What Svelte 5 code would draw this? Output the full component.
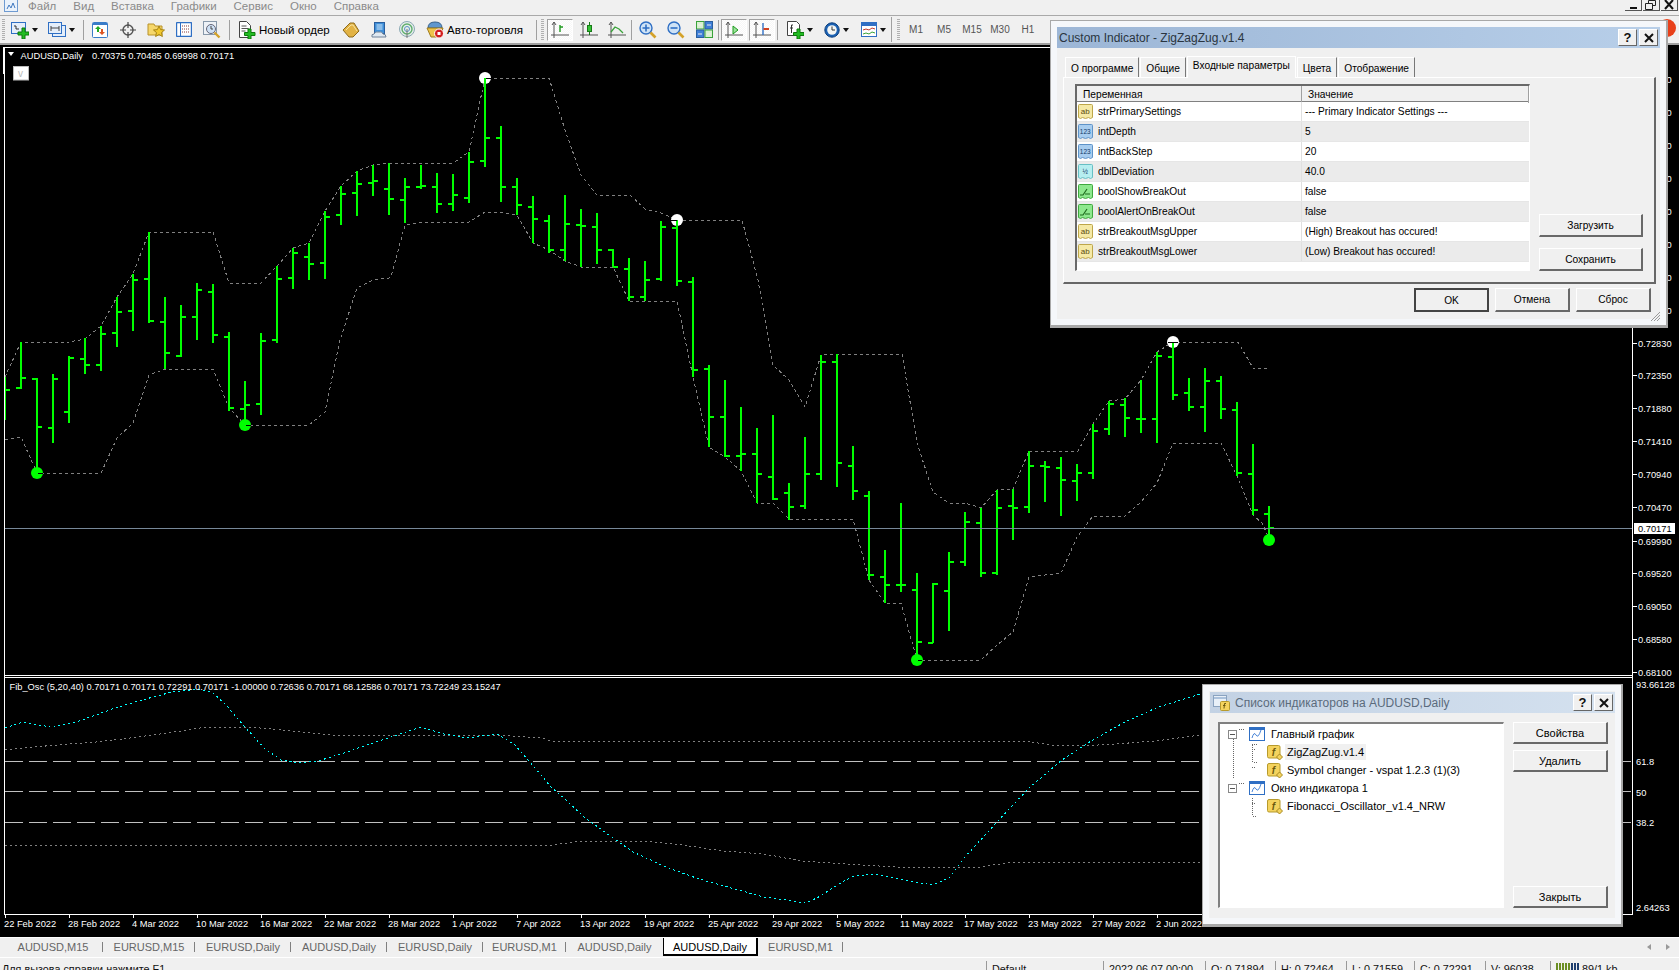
<script lang="ts">
  // [x-index from 5 step 16]: high, low, open, close in page pixels
  const bars = [
    [377,420,0,390],[342,389,388,378],[378,473,379,427],[374,443,428,379],[356,423,412,358],
    [338,374,359,365],[326,371,365,334],[297,347,333,312],[274,331,311,280],[232,323,279,321],
    [297,369,322,353],[305,357,356,317],[283,340,317,290],[284,343,292,335],[332,411,337,408],
    [381,423,409,405],[333,415,404,341],[266,343,340,279],[248,289,278,253],[243,280,257,264],
    [211,279,263,217],[186,225,215,194],[171,216,193,184],[165,196,183,181],[163,215,189,199],
    [178,223,200,187],[165,189,187,186],[173,213,187,204],[174,211,204,195],[152,203,198,162],
    [78,167,161,138],[126,202,138,187],[178,215,187,205],[196,243,207,219],[215,253,221,250],
    [195,261,250,224],[209,267,225,226],[213,264,227,250],[249,267,250,267],[258,301,269,297],
    [261,301,297,280],[221,281,279,227],[220,286,228,281],[277,377,282,370],[365,447,369,417],
    [380,457,417,456],[407,471,456,454],[428,503,454,474],[415,500,477,499],[483,520,493,507],
    [437,509,506,474],[355,480,474,362],[354,487,362,463],[446,500,466,491],[491,580,496,575],
    [550,603,577,585],[503,592,585,585],[573,660,590,642],[583,643,643,584],[552,631,591,562],
    [512,566,562,522],[508,577,523,573],[490,575,573,508],[489,540,506,508],[451,513,507,466],
    [461,502,466,467],[457,516,468,480],[464,501,481,473],[424,479,473,431],[401,435,429,404],
    [398,437,405,418],[380,433,419,419],[352,443,419,356],[342,400,357,395],[378,411,393,407],
    [368,432,407,381],[376,419,381,409],[402,476,410,473],[444,515,474,510],[506,538,514,528]
  ];

  const barPath = bars.map((b, i) => {
    const x = 5 + i * 16;
    let d = `M${x} ${b[0]}V${b[1]}`;
    if (b[2]) d += `M${x - 5} ${b[2]}H${x}`;
    d += `M${x} ${b[3]}H${x + 5}`;
    return d;
  }).join('');

  const line = (pts: number[][]) => 'M' + pts.map((p) => p.join(' ')).join('L');

  const upper = line([[5,377],[21,342],[69,342],[85,339],[101,326],[117,297],[133,274],[149,232],[213,232],[229,283],[261,283],[277,266],[293,248],[309,243],[325,211],[341,186],[357,171],[373,165],[389,163],[453,163],[469,152],[485,78],[549,78],[565,130],[581,175],[597,195],[630,195],[645,209],[661,213],[677,220],[742,220],[758,280],[773,365],[789,380],[805,407],[821,355],[837,354],[902,354],[917,443],[933,492],[949,503],[965,503],[981,508],[997,490],[1013,489],[1029,451],[1078,451],[1093,424],[1109,401],[1125,399],[1141,380],[1157,352],[1173,342],[1238,342],[1253,368],[1269,368]]);
  const lower = line([[5,440],[21,437],[37,473],[101,473],[117,438],[133,423],[149,375],[165,369],[213,369],[229,408],[245,425],[309,425],[325,412],[340,340],[357,288],[373,280],[389,278],[392,273],[405,225],[421,222],[469,222],[485,212],[501,212],[517,215],[533,243],[549,250],[565,261],[581,267],[613,267],[629,301],[677,301],[693,377],[709,447],[725,457],[741,471],[757,503],[773,503],[789,519],[853,519],[869,580],[885,603],[901,603],[917,660],[981,660],[997,645],[1013,632],[1029,577],[1061,573],[1077,537],[1093,516],[1125,516],[1141,502],[1157,483],[1173,443],[1221,443],[1237,476],[1253,515],[1262,523],[1269,538]]);

  const cyan = line([[5,728],[23,722],[50,727],[76,722],[96,715],[115,708],[142,700],[172,692],[199,689],[212,692],[226,705],[245,727],[264,748],[281,760],[298,763],[318,761],[344,753],[367,745],[394,736],[421,727],[444,734],[467,738],[497,734],[515,745],[530,762],[551,787],[564,798],[584,817],[609,835],[633,852],[666,867],[699,879],[731,888],[764,897],[793,901],[805,903],[817,898],[842,882],[854,876],[874,874],[891,877],[915,882],[933,885],[950,877],[964,858],[997,822],[1029,788],[1062,760],[1091,741],[1123,723],[1156,708],[1200,694]]);
  const oscHi = line([[5,750],[23,748],[57,745],[96,742],[130,738],[168,733],[207,727],[249,727],[283,730],[333,735],[364,736],[402,735],[497,735],[543,738],[551,741],[1025,741],[1050,745],[1082,746],[1115,744],[1156,741],[1200,735]]);
  const oscLo = line([[5,845],[553,845],[574,842],[593,841],[642,841],[682,845],[723,851],[764,854],[801,861],[846,864],[895,867],[952,868],[980,867],[1013,862],[1200,862]]);

  const dates = ['22 Feb 2022','28 Feb 2022','4 Mar 2022','10 Mar 2022','16 Mar 2022','22 Mar 2022','28 Mar 2022','1 Apr 2022','7 Apr 2022','13 Apr 2022','19 Apr 2022','25 Apr 2022','29 Apr 2022','5 May 2022','11 May 2022','17 May 2022','23 May 2022','27 May 2022','2 Jun 2022'];
  const prices = [['0.76590',79],['0.76120',112],['0.75650',145],['0.75180',178],['0.74710',211],['0.74240',244],['0.73770',277],['0.73300',310],['0.72830',343],['0.72350',375],['0.71880',408],['0.71410',441],['0.70940',474],['0.70470',507],['0.69990',541],['0.69520',573],['0.69050',606],['0.68580',639],['0.68100',672]];
  const levels = [['61.8',761],['50',792],['38.2',822]];

  const menu = ['Файл','Вид','Вставка','Графики','Сервис','Окно','Справка'];
  const periods = ['M1','M5','M15','M30','H1'];
  const dlgTabs = ['О программе','Общие','Входные параметры','Цвета','Отображение'];
  const params = [
    ['ab','strPrimarySettings','--- Primary Indicator Settings ---'],
    ['int','intDepth','5'],
    ['int','intBackStep','20'],
    ['dbl','dblDeviation','40.0'],
    ['bool','boolShowBreakOut','false'],
    ['bool','boolAlertOnBreakOut','false'],
    ['ab','strBreakoutMsgUpper','(High) Breakout has occured!'],
    ['ab','strBreakoutMsgLower','(Low) Breakout has occured!']
  ];
  const chartTabs = [['AUDUSD,M15',100],['EURUSD,M15',92],['EURUSD,Daily',96],['AUDUSD,Daily',96],['EURUSD,Daily',96],['EURUSD,M1',83],['AUDUSD,Daily',97],['AUDUSD,Daily',95],['EURUSD,M1',85]];
  const statusCells = [['Default',117],['2022.06.07 00:00',102],['O: 0.71894',70],['H: 0.72464',71],['L: 0.71559',68],['C: 0.72291',71],['V: 96038',65]];
</script>

{#snippet paramIcon(kind)}
  <svg class="row-icon" class:i-ab={kind === 'ab'} class:i-int={kind === 'int'} class:i-dbl={kind === 'dbl'} class:i-bool={kind === 'bool'} viewBox="0 0 15 15" width="15" height="15">
    <path class="pg" d="M.5 1.5q0-1 1-1h12q1 0 1 1v12l-2 1-2-1-3 1-3-1-2 1-2-1z" />
    {#if kind === 'ab'}<text x="7.3" y="10" text-anchor="middle">ab</text>{/if}
    {#if kind === 'int'}<text x="7.3" y="9.6" text-anchor="middle" class="small">123</text>{/if}
    {#if kind === 'dbl'}<text x="7.3" y="9.6" text-anchor="middle" class="small">½</text>{/if}
    {#if kind === 'bool'}<path d="M2 11h3l4-6h0M7 10h5" fill="none" stroke="#1d6b1d" stroke-width="1.2" />{/if}
  </svg>
{/snippet}

{#snippet chartIcon()}
  <svg viewBox="0 0 16 14" width="16" height="14">
    <rect x=".5" y=".5" width="15" height="13" fill="#fff" stroke="#2f6fc4" />
    <rect x="1" y="1" width="14" height="2" fill="#2f6fc4" />
    <path d="M3 11q2-7 4-3t5-5" fill="none" stroke="#4a86d8" />
  </svg>
{/snippet}

{#snippet fnIcon()}
  <svg viewBox="0 0 16 15" width="16" height="15">
    <rect x=".5" y=".5" width="12.5" height="12.5" rx="1.5" fill="#f4d35e" stroke="#b79a2c" />
    <text x="6.5" y="10.5" text-anchor="middle" class="fn">f</text>
    <path d="M12.5 9l3 3-3 3-3-3z" fill="#f4d35e" stroke="#a88a20" />
  </svg>
{/snippet}

{#snippet axes(color)}
  <path d="M3 1v16M0 14h18M1 4l2-3 2 3" fill="none" stroke="#555" />
{/snippet}

<div class="app">
  <div class="menubar">
    <svg class="app-icon" viewBox="0 0 14 12" width="14" height="12">
      <rect x=".5" y="-2" width="13" height="13.5" fill="#eaf2fb" stroke="#6f9bd1" />
      <path d="M3 9l2-4 2 3 2-5 2 5" fill="none" stroke="#3f78c0" />
    </svg>
    {#each menu as item}
      <span class="menu-item">{item}</span>
    {/each}
    <div class="win-buttons">
      <span class="win-btn"><i class="min"></i></span>
      <span class="win-btn"><svg viewBox="0 0 12 10" width="12" height="10"><path d="M3.5 3V.5h7v5H8M.5 3.5h7v6h-7z" fill="none" stroke="#222" /></svg></span>
      <span class="win-btn">
        <svg viewBox="0 0 10 10" width="10" height="10"><path d="M1 0l8 9M9 0l-8 9" stroke="#111" stroke-width="2" /></svg>
      </span>
    </div>
  </div>

  <div class="toolbar">
    <i class="handle"></i>
    <div class="cell dd first">
      <svg viewBox="0 0 18 18" width="18" height="18"><rect x=".5" y="1.5" width="14" height="11" fill="#e4eefa" stroke="#2f6fc4" /><path d="M3 5h2v3h3" fill="none" stroke="#333" /><path d="M11 7h3v4h4v3h-4v4h-3v-4H7v-3h4z" fill="#22bb22" stroke="#0c7a0c" /></svg>
      <i class="arrow"></i>
    </div>
    <div class="cell dd">
      <svg viewBox="0 0 18 18" width="18" height="18"><rect x="4.5" y="4.5" width="13" height="11" fill="#e4eefa" stroke="#2f6fc4" /><rect x=".5" y="1.5" width="13" height="11" fill="#e4eefa" stroke="#2f6fc4" /><path d="M3 5v5M11 5v5M3 7h8" stroke="#444" fill="none" /></svg>
      <i class="arrow"></i>
    </div>
    <i class="sep"></i>
    <div class="cell"><svg viewBox="0 0 16 16" width="16" height="16"><rect x=".5" y=".5" width="15" height="15" rx="1" fill="#fff" stroke="#3a7cc8" /><rect x="1" y="1" width="14" height="2" fill="#3a7cc8" /><path d="M6 4l3 3H7v3H5V7H3z" fill="#22aa22" /><path d="M10 13l-3-3h2V7h2v3h2z" fill="#dd5522" /></svg></div>
    <div class="cell"><svg viewBox="0 0 16 16" width="16" height="16"><circle cx="8" cy="8" r="5" fill="none" stroke="#555" stroke-width="1.4" /><path d="M8 0v6M8 10v6M0 8h6M10 8h6" stroke="#444" stroke-width="1.2" /></svg></div>
    <div class="cell"><svg viewBox="0 0 18 17" width="18" height="17"><path d="M1 3h6l1 2h7v9H1z" fill="#f6d76b" stroke="#b8922a" /><path d="M12 5l1.6 3.6 3.9.4-3 2.6.9 3.9-3.4-2-3.4 2 .9-3.9-3-2.6 3.9-.4z" fill="#f2c92e" stroke="#a58214" /></svg></div>
    <div class="cell"><svg viewBox="0 0 16 15" width="16" height="15"><rect x=".5" y=".5" width="15" height="14" rx="1" fill="#fff" stroke="#2f6fc4" stroke-width="1.4" /><path d="M4.5 1v13" stroke="#2f6fc4" /><path d="M6 4h7M6 7h7M6 10h7" stroke="#8a3a3a" stroke-dasharray="1 1" /></svg></div>
    <div class="cell"><svg viewBox="0 0 18 18" width="18" height="18"><rect x=".5" y=".5" width="13" height="13" fill="#eef2f7" stroke="#8899aa" /><circle cx="8" cy="8" r="4.5" fill="#cfe2f6" stroke="#667" /><path d="M8 5v3h2" fill="none" stroke="#444" /><path d="M11.5 11.5l5 5" stroke="#d4a22a" stroke-width="2.4" /></svg></div>
    <i class="sep wide"></i>
    <div class="cell text-btn order">
      <svg viewBox="0 0 18 18" width="18" height="18"><path d="M1.5.5h7l4 4v12h-11z" fill="#fff" stroke="#444" /><path d="M3.5 5h5M3.5 7.5h7M3.5 10h4" stroke="#555" /><path d="M10 8h3v3.500h4v3h-4v3.500h-3v-3.500H6.500v-3H10z" fill="#22bb22" stroke="#0c7a0c" /></svg>
      <span>Новый ордер</span>
    </div>
    <div class="cell"><svg viewBox="0 0 18 16" width="18" height="16"><path d="M1 8l7-7h4l5 8-6 6H7z" fill="#e2b345" stroke="#8d6a1a" /><path d="M4 8l5-5h2l4 6" fill="none" stroke="#f7e3a0" /></svg></div>
    <div class="cell"><svg viewBox="0 0 16 16" width="16" height="16"><rect x="3.500" y=".5" width="10" height="11" fill="#3f8fd8" stroke="#2a5f9e" /><path d="M5.500 3h6M5.500 5h6M5.500 7h6" stroke="#d9ecfb" /><path d="M1 15q-1-3 2-3 1-3 5-2 3-1 4 2 3 0 3 3z" fill="#dfe8f1" stroke="#6f8299" /></svg></div>
    <div class="cell"><svg viewBox="0 0 16 17" width="16" height="17"><circle cx="8" cy="8" r="7.500" fill="#e6eeea" stroke="#8aa8b4" /><circle cx="8" cy="8" r="5" fill="none" stroke="#5fae6e" stroke-width="1.4" /><circle cx="8" cy="8" r="2.500" fill="none" stroke="#5a93c4" /><path d="M8 8v9" stroke="#777" /></svg></div>
    <div class="cell text-btn auto">
      <svg viewBox="0 0 18 18" width="18" height="18"><path d="M2 7q0-6 7-6t7 6z" fill="#5f97cf" stroke="#345f8c" /><path d="M1 7h16l-3 9H5z" fill="#eec44a" stroke="#a07c1c" /><circle cx="13" cy="12.500" r="4.500" fill="#d21f1f" stroke="#fff" /><rect x="11.500" y="11" width="3" height="3" fill="#fff" /></svg>
      <span>Авто-торговля</span>
    </div>
    <i class="sep"></i>
    <i class="handle h2"></i>
    <div class="toggle">
      <svg viewBox="0 0 18 18" width="18" height="18">{@render axes()}<path d="M9 11V4M9 6h3" fill="none" stroke="#1f9a1f" stroke-width="1.4" /></svg>
    </div>
    <div class="cell"><svg viewBox="0 0 18 18" width="18" height="18">{@render axes()}<rect x="7.500" y="4.500" width="4" height="6" fill="#35c335" stroke="#187a18" /><path d="M9.500 1v3M9.500 11v3" stroke="#187a18" /></svg></div>
    <div class="cell"><svg viewBox="0 0 18 18" width="18" height="18">{@render axes()}<path d="M3 11l4-5 4 2 4 4" fill="none" stroke="#3aa33a" stroke-width="1.3" /></svg></div>
    <i class="sep"></i>
    <div class="cell"><svg viewBox="0 0 18 18" width="18" height="18"><circle cx="7" cy="7" r="6" fill="#cfe3f6" stroke="#2f6fc4" stroke-width="1.4" /><path d="M3.500 7h7M7 3.500v7" stroke="#2f6fc4" stroke-width="1.6" /><path d="M11.500 11.500l5 5" stroke="#d4a22a" stroke-width="2.600" /></svg></div>
    <div class="cell"><svg viewBox="0 0 18 18" width="18" height="18"><circle cx="7" cy="7" r="6" fill="#cfe3f6" stroke="#2f6fc4" stroke-width="1.4" /><path d="M3.500 7h7" stroke="#2f6fc4" stroke-width="1.6" /><path d="M11.500 11.500l5 5" stroke="#d4a22a" stroke-width="2.600" /></svg></div>
    <div class="cell"><svg viewBox="0 0 17 17" width="17" height="17"><rect x=".5" y=".5" width="7.500" height="7.500" fill="#d8f0d0" stroke="#3aa33a" /><rect x="9" y=".5" width="7.500" height="7.500" fill="#3f7fd8" stroke="#2a5f9e" /><rect x=".5" y="9" width="7.500" height="7.500" fill="#3f7fd8" stroke="#2a5f9e" /><rect x="9" y="9" width="7.500" height="7.500" fill="#d8f0d0" stroke="#3aa33a" /><path d="M2 4h4M11 4h4M2 13h4M11 13h4" stroke="#eee" /></svg></div>
    <i class="sep"></i>
    <div class="toggle">
      <svg viewBox="0 0 18 18" width="18" height="18">{@render axes()}<path d="M8 5l5 4-5 4z" fill="#9be29b" stroke="#1f9a1f" /></svg>
    </div>
    <div class="toggle">
      <svg viewBox="0 0 18 18" width="18" height="18">{@render axes()}<path d="M10 2v12" stroke="#2f6fc4" stroke-width="1.4" /><path d="M11 7h5v2h-5l-1-1z" fill="#d2401f" /></svg>
    </div>
    <i class="sep"></i>
    <div class="cell dd x2">
      <svg viewBox="0 0 17 18" width="17" height="18"><path d="M.5.5h9l3 3v11H.5z" fill="#fff" stroke="#444" /><path d="M6 4H4.500v8M3 7h3" fill="none" stroke="#333" /><path d="M10 8h3v3.500h4v3h-4v3.500h-3v-3.500H6.500v-3H10z" fill="#22bb22" stroke="#0c7a0c" /></svg>
      <i class="arrow"></i>
    </div>
    <div class="cell dd x2">
      <svg viewBox="0 0 16 16" width="16" height="16"><circle cx="8" cy="8" r="7.200" fill="#1c62b4" stroke="#0e3f7c" /><circle cx="8" cy="8" r="4.800" fill="#f4f6f4" /><path d="M8 4.500V8h3" fill="none" stroke="#333" /></svg>
      <i class="arrow"></i>
    </div>
    <div class="cell dd x2">
      <svg viewBox="0 0 16 15" width="16" height="15"><rect x=".5" y=".5" width="15" height="14" fill="#fff" stroke="#2f6fc4" /><rect x="1" y="1" width="14" height="3" fill="#2f6fc4" /><path d="M2 8l3-1 3 1 3-2 3 1" fill="none" stroke="#c0392b" /><path d="M2 12l3-1 3 1 3-2 3 1" fill="none" stroke="#3aa33a" /></svg>
      <i class="arrow"></i>
    </div>
    <i class="sep tall"></i>
    <i class="handle h3"></i>
    {#each periods as p}
      <span class="period">{p}</span>
    {/each}
    <i class="red-dot"></i>
  </div>
  <div class="band"></div>

  <div class="workspace">
    <svg class="chart" viewBox="0 45 1679 892" width="1679" height="892">
      <path d={upper} class="env" />
      <path d={lower} class="env" />
      <circle cx="485" cy="78" r="6" fill="#fff" />
      <circle cx="677" cy="220" r="6" fill="#fff" />
      <circle cx="1173" cy="342" r="6" fill="#fff" />
      <circle cx="37" cy="473" r="6" fill="#0f0" />
      <circle cx="245" cy="425" r="6" fill="#0f0" />
      <circle cx="917" cy="660" r="6" fill="#0f0" />
      <path d={barPath} class="bars" />
      <circle cx="1269" cy="540" r="6" fill="#0f0" />
      <path d="M486 78h5M671 220h6M1168 342h10M38 473h5M246 425h5M918 660h4" class="ticks" />
      <path d="M5 528H1632" stroke="#778899" shape-rendering="crispEdges" />

      <path d={oscHi} class="osc-grey" />
      <path d={oscLo} class="osc-grey" />
      <path d="M5 761.500H1632M5 791.500H1632M5 822.500H1632" class="fib" />
      <path d={cyan} class="osc-cyan" />

      <path d="M4 47.500H1632.500V914.500H4.500ZM4 675.500H1632M4 677.500H1632" class="frame" />
      {#each dates as d, i}
        <path d="M{5 + i * 64}.5 915v3" class="frame" />
        <text x={4 + i * 64} y="926.500">{d}</text>
      {/each}
      {#each prices as p}
        <path d="M1633 {p[1]}.5h4" class="frame" />
        <text x="1638" y={p[1] + 3.500}>{p[0]}</text>
      {/each}
      {#each levels as l}
        <text x="1636" y={l[1] + 3.500}>{l[0]}</text>
      {/each}
      <rect x="1634" y="523" width="41" height="11" fill="#fff" />
      <text x="1638" y="531.500" fill="#000" class="dark">0.70171</text>
      <text x="1636" y="687.500">93.66128</text>
      <text x="1636" y="910.500">2.64263</text>

      <path d="M8 52h6l-3 4z" fill="#fff" />
      <text x="20.500" y="59">AUDUSD,Daily</text>
      <text x="92" y="59">0.70375 0.70485 0.69998 0.70171</text>
      <rect x="13.500" y="66.500" width="15" height="13.500" fill="#fff" stroke="#bbb" />
      <text x="18" y="77" class="vbox">v</text>
      <text x="9.500" y="690">Fib_Osc (5,20,40) 0.70171 0.70171 0.72291 0.70171 -1.00000 0.72636 0.70171 68.12586 0.70171 73.72249 23.15247</text>
    </svg>
  </div>

  <div class="tabbar">
    {#each chartTabs as t, i}
      <span class="chart-tab" class:active={i === 7} class:before-active={i === 6} style="width: {t[1]}px">{t[0]}</span>
    {/each}
    <i class="nav left"></i>
    <i class="nav right"></i>
  </div>

  <div class="statusbar">
    <span class="status-help">Для вызова справки нажмите F1</span>
    {#each statusCells as c}
      <span class="status-cell" style="width: {c[1]}px">{c[0]}</span>
    {/each}
    <span class="status-cell conn">
      <svg viewBox="0 0 24 10" width="24" height="10"><path d="M1 0v10M4 0v10M7 0v10M10 0v10M13 0v10" stroke="#6b8e23" stroke-width="2" /><path d="M16 0v10M19 0v10M22 0v10" stroke="#1f3f6f" stroke-width="2" /></svg>
      89/1 kb
    </span>
  </div>

  <div class="dialog props">
    <div class="title-bar">
      <span class="title">Custom Indicator - ZigZagZug.v1.4</span>
      <span class="cap-btn">?</span>
      <span class="cap-btn"><svg viewBox="0 0 10 10" width="10" height="10"><path d="M1 1l8 8M9 1l-8 8" stroke="#111" stroke-width="2" /></svg></span>
    </div>
    <div class="dlg-tabs">
      {#each dlgTabs as t, i}
        <span class="dlg-tab" class:current={i === 2}>{t}</span>
      {/each}
    </div>
    <div class="panel">
      <div class="param-table">
        <div class="param-head">
          <span>Переменная</span>
          <span>Значение</span>
        </div>
        {#each params as row, i}
          <div class="param-row" class:odd={i % 2 === 1}>
            <span class="name">{@render paramIcon(row[0])}{row[1]}</span>
            <span class="val">{row[2]}</span>
          </div>
        {/each}
      </div>
      <div class="side-buttons">
        <button class="btn">Загрузить</button>
        <button class="btn">Сохранить</button>
      </div>
    </div>
    <div class="dlg-actions">
      <button class="btn default">OK</button>
      <button class="btn">Отмена</button>
      <button class="btn">Сброс</button>
    </div>
    <svg class="grip" viewBox="0 0 9 9" width="9" height="9"><path d="M0 9l9-9M3 9l6-6M6 9l3-3" stroke="#999" /></svg>
  </div>

  <div class="dialog list">
    <div class="title-bar inactive">
      <svg class="title-icon" viewBox="0 0 17 16" width="17" height="16"><rect x=".5" y=".5" width="13" height="11" fill="#e8f0f8" stroke="#8aa3c0" /><path d="M1 3h12" stroke="#6f93c0" /><rect x="7.500" y="6.500" width="9" height="9" rx="1" fill="#f4d35e" stroke="#b79a2c" /><path d="M13 8.500h-1.500l-.5 5M10 10.500h2.500" fill="none" stroke="#6b5a10" /></svg>
      <span class="title">Список индикаторов на AUDUSD,Daily</span>
      <span class="cap-btn">?</span>
      <span class="cap-btn"><svg viewBox="0 0 10 10" width="10" height="10"><path d="M1 1l8 8M9 1l-8 8" stroke="#111" stroke-width="2" /></svg></span>
    </div>
    <div class="list-body">
      <div class="tree">
        <svg class="tree-lines" viewBox="0 0 60 100" width="60" height="100">
          <path d="M14.500 17V60M33.500 27V44H38M33.500 27V26H38M33.500 80V98H38" transform="translate(-1 -6)" />
          <path d="M19 6.500h5M19 60.500h5M32 26.500h4M32 44.500h4M32 80.500h4" transform="translate(0 -1)" />
        </svg>
        <div class="tree-row top"><i class="expander"></i>{@render chartIcon()}<span>Главный график</span></div>
        <div class="tree-row child">{@render fnIcon()}<span class="selected">ZigZagZug.v1.4</span></div>
        <div class="tree-row child">{@render fnIcon()}<span>Symbol changer - vspat 1.2.3 (1)(3)</span></div>
        <div class="tree-row top"><i class="expander"></i>{@render chartIcon()}<span>Окно индикатора 1</span></div>
        <div class="tree-row child">{@render fnIcon()}<span>Fibonacci_Oscillator_v1.4_NRW</span></div>
      </div>
      <div class="list-buttons">
        <button class="btn">Свойства</button>
        <button class="btn">Удалить</button>
        <button class="btn push">Закрыть</button>
      </div>
    </div>
  </div>
</div>

<style>
  :global(body) {
    margin: 0;
    background: #000;
  }

  .app {
    position: relative;
    width: 1679px;
    height: 970px;
    overflow: hidden;
    display: flex;
    flex-direction: column;
    background: #f0f0f0;
    font-family: "Liberation Sans", Arial, sans-serif;
    font-size: 11px;
    color: #000;
  }

  /* menu */
  .menubar {
    height: 16px;
    flex: none;
    display: flex;
    align-items: flex-start;
    padding-left: 4px;
    box-sizing: border-box;
    border-bottom: 1px solid #a9a9a9;
    overflow: hidden;
  }

  .app-icon {
    margin-right: 10px;
  }

  .menu-item {
    color: #8a8a8a;
    font-size: 11.500px;
    line-height: 13px;
    margin-right: 17px;
  }

  .win-buttons {
    margin-left: auto;
    display: flex;
    gap: 1px;
    margin-right: 1px;
  }

  .win-btn {
    width: 17px;
    height: 11px;
    background: #f0f0f0;
    border-right: 1px solid #555;
    border-bottom: 1px solid #555;
    display: flex;
    align-items: center;
    justify-content: center;
    box-sizing: border-box;
  }

  .win-btn .min {
    width: 7px;
    height: 2px;
    background: #111;
    margin-top: 6px;
  }

  /* toolbar */
  .toolbar {
    position: relative;
    height: 27px;
    flex: none;
    display: flex;
    align-items: center;
    padding-left: 2px;
    box-sizing: border-box;
  }

  .handle {
    width: 3px;
    height: 22px;
    flex: none;
    background: repeating-linear-gradient(#b0b0b0 0 1px, transparent 1px 2px);
  }

  .handle.h2 {
    margin: 0 3px 0 2px;
  }

  .handle.h3 {
    margin: 0 2px 0 3px;
  }

  .sep {
    width: 1px;
    height: 20px;
    flex: none;
    background: #a0a0a0;
    margin-right: 2px;
  }

  .sep.wide {
    margin-left: 3px;
  }

  .sep.tall {
    height: 25px;
  }

  .cell {
    width: 28px;
    height: 24px;
    flex: none;
    display: flex;
    align-items: center;
    justify-content: center;
  }

  .cell.dd {
    width: 37px;
    justify-content: flex-start;
    padding-left: 2px;
    box-sizing: border-box;
    gap: 3px;
  }

  .cell.dd.first {
    margin-left: 4px;
  }

  .cell.dd.x2 {
    padding-left: 7px;
  }

  .arrow {
    width: 0;
    height: 0;
    border-left: 3.500px solid transparent;
    border-right: 3.500px solid transparent;
    border-top: 4px solid #111;
  }

  .text-btn {
    gap: 3px;
    font-size: 11.500px;
    justify-content: flex-start;
    padding-left: 6px;
    box-sizing: border-box;
    white-space: nowrap;
  }

  .text-btn.order {
    width: 105px;
  }

  .text-btn.auto {
    width: 115px;
    padding-left: 5px;
  }

  .toggle {
    width: 26px;
    height: 22px;
    flex: none;
    margin-right: 2px;
    box-sizing: border-box;
    display: flex;
    align-items: center;
    justify-content: center;
    background: repeating-conic-gradient(#f7f7f7 0 25%, #fff 0 50%) 0 0 / 2px 2px;
    border: 1px solid #fff;
    border-top-color: #a0a0a0;
    border-left-color: #a0a0a0;
  }

  .period {
    width: 28px;
    flex: none;
    text-align: center;
    font-size: 10px;
    color: #555;
  }

  .red-dot {
    position: absolute;
    left: 1658px;
    top: 3px;
    width: 18px;
    height: 18px;
    border-radius: 50%;
    background: #e8401a;
  }

  .band {
    height: 2px;
    flex: none;
    background: #a0a0a0;
  }

  /* chart */
  .workspace {
    height: 892px;
    flex: none;
    background: #000;
    overflow: hidden;
  }

  .chart {
    display: block;
  }

  .chart text {
    font-size: 9.300px;
    fill: #fff;
  }

  .chart text.dark {
    fill: #000;
  }

  .chart text.vbox {
    fill: #bbb;
    font-size: 10px;
  }

  .bars {
    fill: none;
    stroke: #0f0;
    stroke-width: 2;
    shape-rendering: crispEdges;
  }

  .ticks {
    stroke: #000;
    shape-rendering: crispEdges;
  }

  .env {
    fill: none;
    stroke: #808080;
    stroke-dasharray: 3 3;
    shape-rendering: crispEdges;
  }

  .osc-cyan {
    fill: none;
    stroke: #0ff;
    stroke-dasharray: 2 3;
    shape-rendering: crispEdges;
  }

  .osc-grey {
    fill: none;
    stroke: #808080;
    stroke-dasharray: 2 3;
    shape-rendering: crispEdges;
  }

  .fib {
    stroke: #c0c0c0;
    stroke-dasharray: 18 6;
    shape-rendering: crispEdges;
  }

  .frame {
    fill: none;
    stroke: #fff;
    shape-rendering: crispEdges;
  }

  /* tabs + status */
  .tabbar {
    height: 21px;
    flex: none;
    display: flex;
    padding-left: 3px;
    box-sizing: border-box;
    border-top: 1px solid #fff;
    border-bottom: 1px solid #fff;
    background: #f0f0f0;
    position: relative;
  }

  .chart-tab {
    box-sizing: border-box;
    height: 17px;
    line-height: 18px;
    text-align: center;
    color: #666;
    position: relative;
  }

  .chart-tab::after {
    content: "";
    position: absolute;
    right: 0;
    top: 4px;
    height: 10px;
    width: 1px;
    background: #808080;
  }

  .chart-tab.before-active::after {
    display: none;
  }

  .chart-tab.active {
    color: #000;
    background: #fff;
    border: 1px solid #000;
    border-top: 0;
    border-bottom-width: 2px;
    border-right-width: 2px;
    height: 18px;
    line-height: 18px;
  }

  .chart-tab.active::after {
    display: none;
  }

  .nav {
    position: absolute;
    top: 6px;
    width: 0;
    height: 0;
    border-top: 3.500px solid transparent;
    border-bottom: 3.500px solid transparent;
  }

  .nav.left {
    left: 1647px;
    border-right: 4px solid #999;
  }

  .nav.right {
    left: 1666px;
    border-left: 4px solid #999;
  }

  .statusbar {
    height: 12px;
    flex: none;
    display: flex;
    overflow: hidden;
    align-items: flex-start;
    line-height: 13px;
    font-size: 10.800px;
    color: #111;
  }

  .status-help {
    width: 986px;
    flex: none;
    padding: 5px 0 0 2px;
    box-sizing: border-box;
  }

  .status-cell {
    flex: none;
    box-sizing: border-box;
    margin-top: 3px;
    padding: 2px 0 0 5px;
    height: 14px;
    border-left: 1px solid #999;
    white-space: nowrap;
  }

  .status-cell.conn {
    display: flex;
    gap: 2px;
    align-items: flex-start;
  }

  /* dialogs */
  .dialog {
    position: absolute;
    box-sizing: border-box;
    background: #f0f0f0;
    border: 1px solid #a8a8a8;
    border-bottom-width: 3px;
    border-right-width: 2px;
    box-shadow: inset 0 0 0 6px #f5f7fa;
    display: flex;
    flex-direction: column;
    font-size: 10.200px;
  }

  .dialog.props {
    left: 1050px;
    top: 20px;
    width: 618px;
    height: 308px;
    padding: 6px 6px 0;
  }

  .dialog.list {
    left: 1202px;
    top: 684px;
    width: 421px;
    height: 243px;
    padding: 7px 6px 0 7px;
    font-size: 11px;
  }

  .title-bar {
    height: 21px;
    flex: none;
    display: flex;
    align-items: center;
    gap: 2px;
    padding: 0 2px 0 2px;
    background: linear-gradient(90deg, #9cb6d6, #b8cfe9);
  }

  .title-bar.inactive {
    background: linear-gradient(90deg, #c3d2e4, #d4e1ef);
    padding-left: 3px;
  }

  .title-bar .title {
    font-size: 12px;
    color: #2a3540;
    margin-right: auto;
  }

  .title-bar.inactive .title {
    color: #5b6b7c;
    margin-left: 3px;
  }

  .cap-btn {
    width: 19px;
    height: 17px;
    box-sizing: border-box;
    background: #f0f0f0;
    border: 1px solid #fff;
    border-right-color: #666;
    border-bottom-color: #666;
    display: flex;
    align-items: center;
    justify-content: center;
    font-size: 13px;
    font-weight: 700;
    color: #111;
  }

  .dlg-tabs {
    display: flex;
    height: 29px;
    flex: none;
    align-items: flex-end;
    padding-left: 8px;
  }

  .dlg-tab {
    box-sizing: border-box;
    height: 20px;
    line-height: 21px;
    padding: 0 5px;
    border-left: 1px solid #fff;
    border-top: 1px solid #fff;
    border-right: 1px solid #777;
    margin-right: 1px;
    white-space: nowrap;
  }

  .dlg-tab.current {
    height: 22px;
    line-height: 18px;
    padding: 0 5px;
    margin-bottom: -1px;
    background: #f0f0f0;
    position: relative;
    z-index: 1;
    border-right-color: #fff;
  }

  .panel {
    height: 207px;
    flex: none;
    margin: 0 4px 0 6px;
    box-sizing: border-box;
    display: flex;
    align-items: flex-end;
    gap: 9px;
    padding: 0 0 11px 11px;
    border: 1px solid #fff;
    border-right: 2px solid #666;
    border-bottom: 2px solid #666;
  }

  .param-table {
    width: 455px;
    height: 187px;
    box-sizing: border-box;
    background: #fff;
    border: 2px solid #696969;
    border-right: 1px solid #fff;
    border-bottom: 1px solid #fff;
  }

  .param-head,
  .param-row {
    display: grid;
    grid-template-columns: 225px 1fr;
    height: 20px;
    box-sizing: border-box;
    border-bottom: 1px solid #e6e6e6;
    white-space: nowrap;
  }

  .param-head {
    height: 16px;
    background: #f0f0f0;
    border-bottom: 1px solid #808080;
    line-height: 17px;
  }

  .param-head span {
    padding-left: 6px;
    border-right: 1px solid #a0a0a0;
  }

  .param-row.odd {
    background: #ebebeb;
  }

  .param-row .name {
    display: flex;
    align-items: center;
    gap: 5px;
    padding-left: 1px;
    border-right: 1px solid #e0e0e0;
  }

  .param-row .val {
    line-height: 19px;
    padding-left: 3px;
  }

  .row-icon .pg {
    stroke-width: 1;
  }

  .i-ab .pg {
    fill: #f5e9a6;
    stroke: #bda64a;
  }

  .i-int .pg {
    fill: #a8cdef;
    stroke: #5e93c8;
  }

  .i-dbl .pg {
    fill: #b6eef0;
    stroke: #66bfc4;
  }

  .i-bool .pg {
    fill: #8ee88e;
    stroke: #3fa83f;
  }

  .row-icon text {
    font-size: 8px;
    fill: #5a4c10;
  }

  .row-icon .small {
    font-size: 6.500px;
    fill: #123a6a;
  }

  .side-buttons {
    display: flex;
    flex-direction: column;
    gap: 11px;
  }

  .btn {
    box-sizing: border-box;
    width: 104px;
    height: 23px;
    padding: 0;
    font: inherit;
    color: #000;
    background: #f0f0f0;
    border: 1px solid #fff;
    border-right: 2px solid #696969;
    border-bottom: 2px solid #696969;
  }

  .dlg-actions {
    display: flex;
    gap: 6px;
    justify-content: flex-end;
    padding: 4px 9px 0 0;
  }

  .dlg-actions .btn {
    width: 75px;
    height: 24px;
  }

  .btn.default {
    border: 2px solid #444;
    border-right-width: 2px;
    border-bottom-width: 2px;
  }

  .grip {
    position: absolute;
    right: 6px;
    bottom: 4px;
  }

  .list-body {
    display: flex;
    gap: 9px;
    padding: 9px 0 0 8px;
    flex: 1;
    min-height: 0;
  }

  .tree {
    position: relative;
    width: 286px;
    height: 186px;
    box-sizing: border-box;
    background: #fff;
    border: 2px solid #808080;
    border-right: 1px solid #fff;
    border-bottom: 1px solid #fff;
    padding-top: 1px;
  }

  .tree-lines {
    position: absolute;
    left: 0;
    top: 0;
    fill: none;
    stroke: #666;
    stroke-dasharray: 1 1;
    shape-rendering: crispEdges;
  }

  .tree-row {
    height: 18px;
    display: flex;
    align-items: center;
    white-space: nowrap;
    position: relative;
  }

  .tree-row.top {
    padding-left: 8px;
    gap: 6px;
  }

  .tree-row.top > :global(svg) {
    margin-left: 6px;
  }

  .tree-row.child {
    padding-left: 47px;
    gap: 4px;
  }

  .expander {
    width: 9px;
    height: 9px;
    box-sizing: border-box;
    border: 1px solid #888;
    background: linear-gradient(#555, #555) center / 5px 1px no-repeat #fff;
  }

  .selected {
    background: #f0f0f0;
    padding: 2px;
    margin-left: -2px;
  }

  .fn {
    font-size: 10px;
    font-style: italic;
    font-weight: 700;
    fill: #6b5a10;
  }

  .list-buttons {
    display: flex;
    flex-direction: column;
    gap: 6px;
    height: 186px;
  }

  .list-buttons .btn {
    width: 95px;
    height: 22px;
  }

  .btn.push {
    margin-top: auto;
  }
</style>
